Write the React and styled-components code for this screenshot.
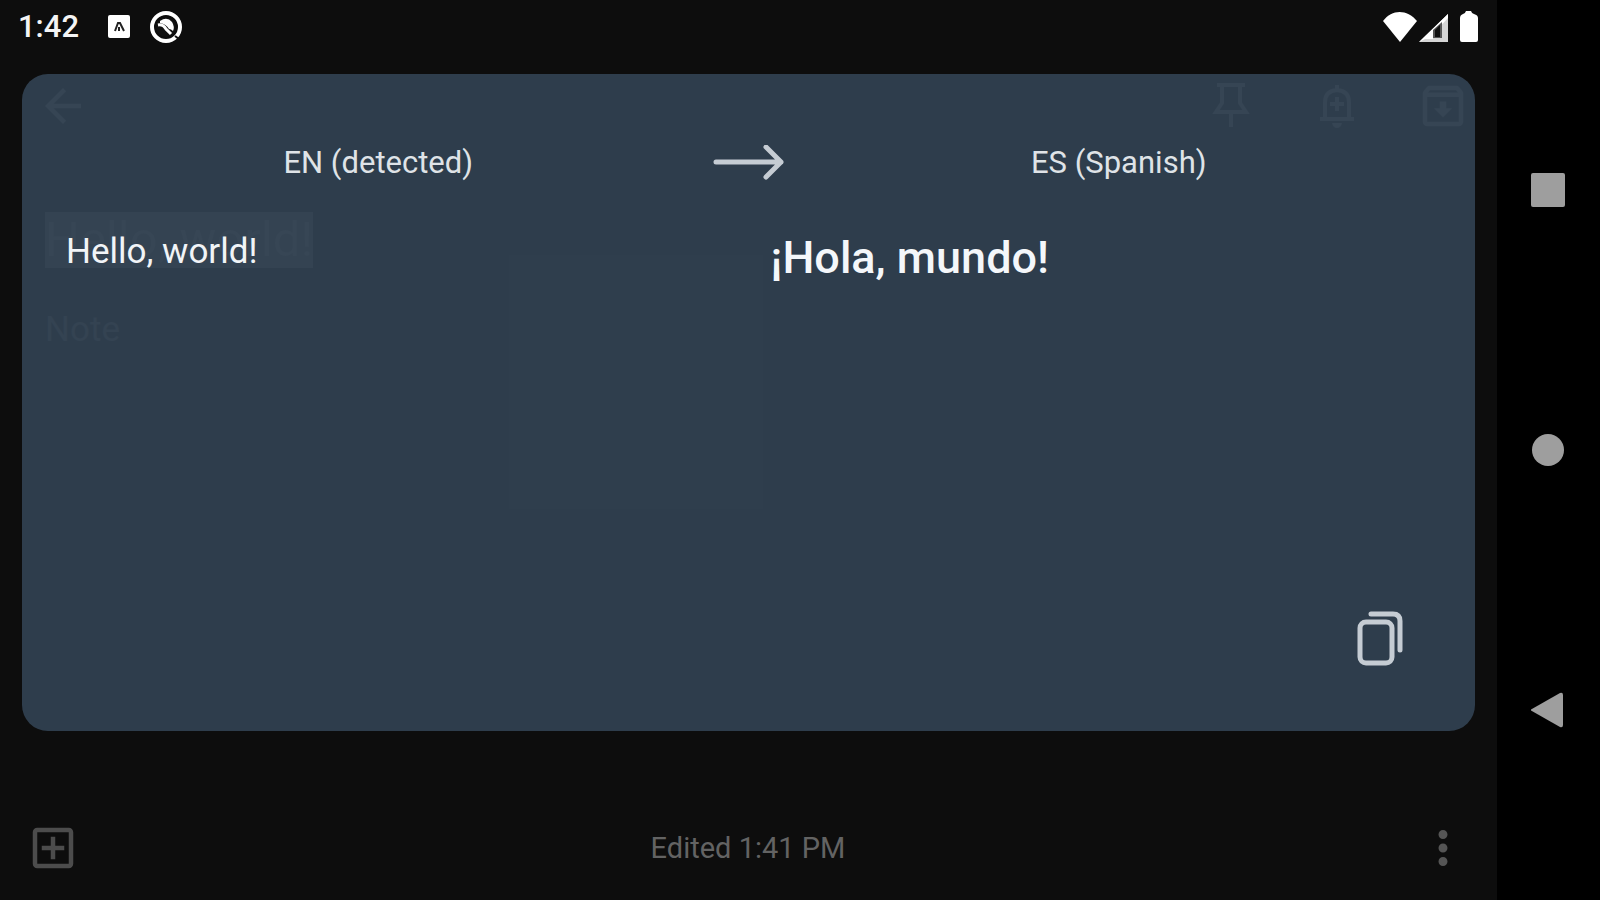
import React from "react";
import styled, { createGlobalStyle } from "styled-components";
import {
  MdArrowBack,
  MdOutlineArchive,
  MdOutlineAddBox,
  MdMoreVert,
} from "react-icons/md";

const GlobalStyle = createGlobalStyle`
  *, *::before, *::after { box-sizing: border-box; }
  html, body { margin: 0; background: #000; }
  body { font-family: Roboto, "Noto Sans", sans-serif; }
  button { font: inherit; }
`;

const Device = styled.div`
  display: grid;
  grid-template-columns: minmax(0, 1fr) 103px;
  min-height: 100vh;
`;

const Screen = styled.div`
  display: flex;
  flex-direction: column;
  background: #0d0d0d;
`;

const StatusBar = styled.header`
  display: flex;
  align-items: center;
  justify-content: space-between;
  height: 54px;
  padding: 0 18px;
`;

const StatusGroup = styled.div`
  display: flex;
  align-items: center;
  gap: ${(p) => p.$gap}px;
`;

const Clock = styled.time`
  font-size: 31px;
  line-height: 40px;
  font-weight: 500;
  color: #f4f4f4;
`;

/* The note and the translation popup share one grid cell. */
const Stage = styled.main`
  flex: 1;
  display: grid;
  grid-template: minmax(0, 1fr) / minmax(0, 1fr);
`;

const Note = styled.section`
  grid-area: 1 / 1;
  display: flex;
  flex-direction: column;
`;

const Toolbar = styled.div`
  display: flex;
  align-items: center;
  justify-content: space-between;
  height: 104px;
  padding: 0 27px 0 36px;
`;

const ToolbarActions = styled.div`
  display: flex;
  gap: 52px;
`;

const IconButton = styled.button`
  display: grid;
  place-items: center;
  min-width: 54px;
  padding: 0;
  border: 0;
  background: none;
  color: ${(p) => p.$color || "#808080"};
  font-size: 54px;
`;

const NoteTitle = styled.h1`
  align-self: flex-start;
  margin: 54px 0 0 45px;
  font-size: 49px;
  line-height: 56px;
  font-weight: 400;
  color: #929292;
  background: #636363;
`;

const NoteBody = styled.textarea`
  flex: 1;
  margin: 40px 45px 0;
  padding: 0;
  border: 0;
  outline: 0;
  resize: none;
  background: none;
  font-family: inherit;
  font-size: 35px;
  line-height: 44px;
  &::placeholder { color: #626262; opacity: 1; }
`;

const Popup = styled.section`
  grid-area: 1 / 1;
  z-index: 1;
  display: flex;
  flex-direction: column;
  margin: 20px 22px 65px;
  padding: 66px 22px 60px;
  border-radius: 26px;
  background: rgba(49, 65, 81, 0.94);
`;

const Languages = styled.div`
  display: grid;
  grid-template-columns: 1fr auto 1fr;
  align-items: center;
  justify-items: center;
  height: 46px;
`;

const Language = styled.button`
  padding: 0;
  border: 0;
  background: none;
  color: #dfe3e7;
  font-size: 31px;
  line-height: 40px;
`;

const Panes = styled.div`
  flex: 1;
  display: grid;
  grid-template-columns: 1fr 1fr;
`;

const Pane = styled.div`
  display: flex;
  flex-direction: column;
  justify-content: space-between;
  padding: 46px 46px 0 22px;
`;

const SourceText = styled.p`
  margin: 0;
  font-size: 35px;
  line-height: 40px;
  color: #f1f4f7;
`;

const TranslatedText = styled.p`
  margin: 0;
  font-size: 45px;
  line-height: 52px;
  font-weight: 500;
  color: #f4f7fa;
`;

const CopyButton = styled(IconButton)`
  align-self: flex-end;
`;

const Footer = styled.footer`
  display: grid;
  grid-template-columns: 1fr auto 1fr;
  align-items: center;
  height: 104px;
  padding: 0 27px 0 26px;
`;

const FooterSide = styled.div`
  display: flex;
  justify-content: ${(p) => (p.$end ? "flex-end" : "flex-start")};
`;

const Edited = styled.span`
  font-size: 29px;
  line-height: 36px;
  color: #636363;
`;

const NavBar = styled.nav`
  display: grid;
  grid-template-rows: repeat(3, 1fr);
  padding: 60px 0;
  background: #000;
`;

const PinIcon = () => (
  <svg width="54" height="54" viewBox="0 0 54 54" fill="none" stroke="currentColor" strokeWidth="4" aria-hidden="true">
    <path d="M13 6h28M18 6v18l-6 9h30l-6-9V6M27 33v15" />
  </svg>
);

const ReminderIcon = () => (
  <svg width="54" height="54" viewBox="0 0 54 54" fill="none" stroke="currentColor" strokeWidth="4" aria-hidden="true">
    <path d="M10 40h34M15 40V23q0-11 12-12 12 1 12 12v17M27 11V6M27 18v14M20 25h14" />
    <path d="M22 44h10q-1 5-5 5t-5-5z" fill="currentColor" stroke="none" />
  </svg>
);

export default function App() {
  return (
    <>
      <GlobalStyle />
      <Device>
        <Screen>
          <StatusBar>
            <StatusGroup $gap={28}>
              <Clock>1:42</Clock>
              <StatusGroup $gap={18}>
                <svg width="24" height="24" viewBox="0 0 24 24" aria-hidden="true">
                  <rect x="1" y="0" width="22" height="23" rx="2" fill="#fff" />
                  <path d="M8 16 11 8h2l4 8M12 12v4" fill="none" stroke="#222" strokeWidth="2" />
                </svg>
                <svg width="34" height="34" viewBox="0 0 34 34" fill="none" aria-hidden="true">
                  <circle cx="17" cy="17" r="14" stroke="#fff" strokeWidth="4" />
                  <circle cx="17" cy="17" r="10" fill="#111" />
                  <path d="M11 11q7-5 12 1 3 5 1 9-2-2-4-2-3-5-9-6z" fill="#fff" />
                  <path d="M9 15q5-1 8 4l5 5" stroke="#fff" strokeWidth="3" />
                  <path d="M26 26l4 3" stroke="#0d0d0d" strokeWidth="2" />
                </svg>
              </StatusGroup>
            </StatusGroup>
            <svg width="98" height="34" viewBox="0 0 98 34" aria-hidden="true">
              <path d="M2 11C11-1 26-1 36 11L19 32z" fill="#fff" />
              <path d="M38 32 67 4v28z" fill="#d5d5d5" />
              <path d="M38 32 67 4v4L52 24v5h-8z" fill="#fff" />
              <path d="M52 20 61 12v16h-9z" fill="#555" />
              <path d="M54 20l5-5v12h-5z" fill="#111" />
              <path d="M82 4q2 0 3-3h5q1 3 3 3 4 1 4 4v22q0 2-2 2H81q-2 0-2-2V8q0-3 3-4z" fill="#fff" />
            </svg>
          </StatusBar>

          <Stage>
            <Note aria-label="Note">
              <Toolbar>
                <IconButton aria-label="Back"><MdArrowBack /></IconButton>
                <ToolbarActions>
                  <IconButton aria-label="Pin"><PinIcon /></IconButton>
                  <IconButton aria-label="Reminder"><ReminderIcon /></IconButton>
                  <IconButton aria-label="Archive"><MdOutlineArchive /></IconButton>
                </ToolbarActions>
              </Toolbar>
              <NoteTitle>Hello, world!</NoteTitle>
              <NoteBody placeholder="Note" aria-label="Note text" />
            </Note>

            <Popup aria-label="Translation">
              <Languages>
                <Language>EN (detected)</Language>
                <svg width="72" height="36" viewBox="0 0 72 36" fill="none" stroke="#c5ccd3" strokeWidth="5" strokeLinecap="round" strokeLinejoin="round" aria-hidden="true">
                  <path d="M3 17h65M53 2l15 15-15 15" />
                </svg>
                <Language>ES (Spanish)</Language>
              </Languages>
              <Panes>
                <Pane>
                  <SourceText>Hello, world!</SourceText>
                </Pane>
                <Pane>
                  <TranslatedText lang="es">¡Hola, mundo!</TranslatedText>
                  <CopyButton $color="#c5ccd3" aria-label="Copy translation">
                    <svg width="52" height="64" viewBox="0 0 52 64" fill="none" stroke="currentColor" strokeWidth="5" strokeLinecap="round" aria-hidden="true">
                      <rect x="6" y="15" width="32" height="41" rx="6" />
                      <path d="M17 7h22q7 0 7 7v29" />
                    </svg>
                  </CopyButton>
                </Pane>
              </Panes>
            </Popup>
          </Stage>

          <Footer>
            <FooterSide>
              <IconButton $color="#4c4c4c" aria-label="Add"><MdOutlineAddBox /></IconButton>
            </FooterSide>
            <Edited>Edited 1:41 PM</Edited>
            <FooterSide $end>
              <IconButton $color="#555" aria-label="More"><MdMoreVert /></IconButton>
            </FooterSide>
          </Footer>
        </Screen>

        <NavBar aria-label="System navigation">
          <IconButton $color="#9e9e9e" aria-label="Recent apps">
            <svg width="36" height="36" viewBox="0 0 36 36" fill="currentColor"><rect x="0" y="1" width="34" height="34" rx="2" /></svg>
          </IconButton>
          <IconButton $color="#9e9e9e" aria-label="Home">
            <svg width="36" height="36" viewBox="0 0 36 36" fill="currentColor"><circle cx="17" cy="18" r="16" /></svg>
          </IconButton>
          <IconButton $color="#9e9e9e" aria-label="Back">
            <svg width="36" height="36" viewBox="0 0 36 36" fill="currentColor"><path d="M-1 18 29 1q3-1 3 2v30q0 3-3 2z" /></svg>
          </IconButton>
        </NavBar>
      </Device>
    </>
  );
}
